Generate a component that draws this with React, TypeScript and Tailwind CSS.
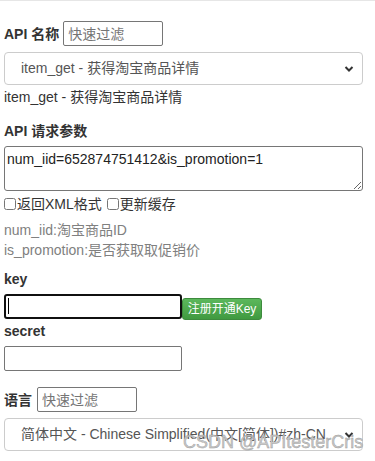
import React from 'react';

const font = { fontFamily: '"Liberation Sans", Arial, "Noto Sans CJK SC", sans-serif' };

const Chevron = () => (
  <svg
    className="absolute right-[9px] top-1/2 -translate-y-1/2 pointer-events-none"
    width="10"
    height="7"
    viewBox="0 0 10 7"
  >
    <path d="M1.5 1.5 L5 5 L8.5 1.5" fill="none" stroke="#333" strokeWidth="2" />
  </svg>
);

const FilterInput = ({ className = '' }: { className?: string }) => (
  <input
    placeholder="快速过滤"
    className={`w-[100px] h-[25px] border border-[#767676] rounded-[2px] px-[4px] text-[14px] text-[#333] placeholder:text-[#757575] outline-none ${className}`}
  />
);

const SelectBox = ({ value }: { value: string }) => (
  <div className="relative mt-[6px] w-[359px]">
    <select
      defaultValue={value}
      className="w-full h-[33px] appearance-none border border-[#ccc] rounded-[4px] bg-white pl-[16px] pr-[24px] text-[14px] text-[#555] outline-none"
    >
      <option value={value}>{value}</option>
    </select>
    <Chevron />
  </div>
);

export default function App() {
  return (
    <div className="relative w-[375px] h-[461px] bg-white text-[#333] overflow-hidden" style={font}>
      {/* top rule */}
      <div className="h-px bg-[#e6e6e6]" />

      <div className="pl-[4px] w-[363px]">
        {/* API 名称 */}
        <div className="mt-[20px] flex items-center">
          <span className="font-bold text-[14px] leading-5">API 名称</span>
          <FilterInput className="ml-[4px]" />
        </div>
        <SelectBox value="item_get - 获得淘宝商品详情" />
        <div className="mt-[2px] text-[14px] leading-5">item_get - 获得淘宝商品详情</div>

        {/* 请求参数 */}
        <div className="mt-[14px] font-bold text-[14px] leading-5">API 请求参数</div>
        <textarea
          defaultValue="num_iid=652874751412&is_promotion=1"
          className="block mt-[5px] w-[359px] h-[45px] border border-[#767676] rounded-[3px] p-[2px] text-[14px] leading-5 text-[#222] outline-none"
        />
        <div className="mt-[3px] flex items-center text-[14px] leading-5">
          <input type="checkbox" className="m-0 w-[12px] h-[12px]" />
          <span className="ml-[1px]">返回XML格式</span>
          <input type="checkbox" className="m-0 ml-[5px] w-[12px] h-[12px]" />
          <span className="ml-[1px]">更新缓存</span>
        </div>
        <div className="mt-[6px] text-[14px] leading-5 text-[#808080]">
          <div>num_iid:淘宝商品ID</div>
          <div>is_promotion:是否获取取促销价</div>
        </div>

        {/* key / secret */}
        <div className="mt-[9px] font-bold text-[14px] leading-5">key</div>
        <div className="mt-[5px] flex items-start">
          <div className="relative">
            <input className="block w-[178px] h-[25px] border-2 border-[#101010] rounded-[3px] px-[3px] text-[14px] outline-none" />
            <div className="absolute left-[4px] top-[4px] w-px h-[16px] bg-black" />
          </div>
          <button className="mt-[4px] w-[80px] h-[22px] rounded-[3px] border border-[#3d8b3d] bg-gradient-to-b from-[#5cb85c] to-[#409a40] text-white text-[12px] leading-none">
            注册开通Key
          </button>
        </div>
        <div className="mt-px font-bold text-[14px] leading-5">secret</div>
        <input className="block mt-[5px] w-[178px] h-[25px] border border-[#767676] rounded-[2px] px-[3px] text-[14px] outline-none" />

        {/* 语言 */}
        <div className="mt-[16px] flex items-center">
          <span className="font-bold text-[14px] leading-5">语言</span>
          <FilterInput className="ml-[5px]" />
        </div>
        <SelectBox value="简体中文 - Chinese Simplified(中文[简体])#zh-CN" />
      </div>

      {/* watermark */}
      <div
        className="absolute left-[183px] top-[430px] text-[18px] leading-6 text-[#c8c8c8] whitespace-nowrap pointer-events-none"
        style={{ WebkitTextStroke: '0.4px #999' }}
      >
        CSDN @APItesterCris
      </div>
    </div>
  );
}
